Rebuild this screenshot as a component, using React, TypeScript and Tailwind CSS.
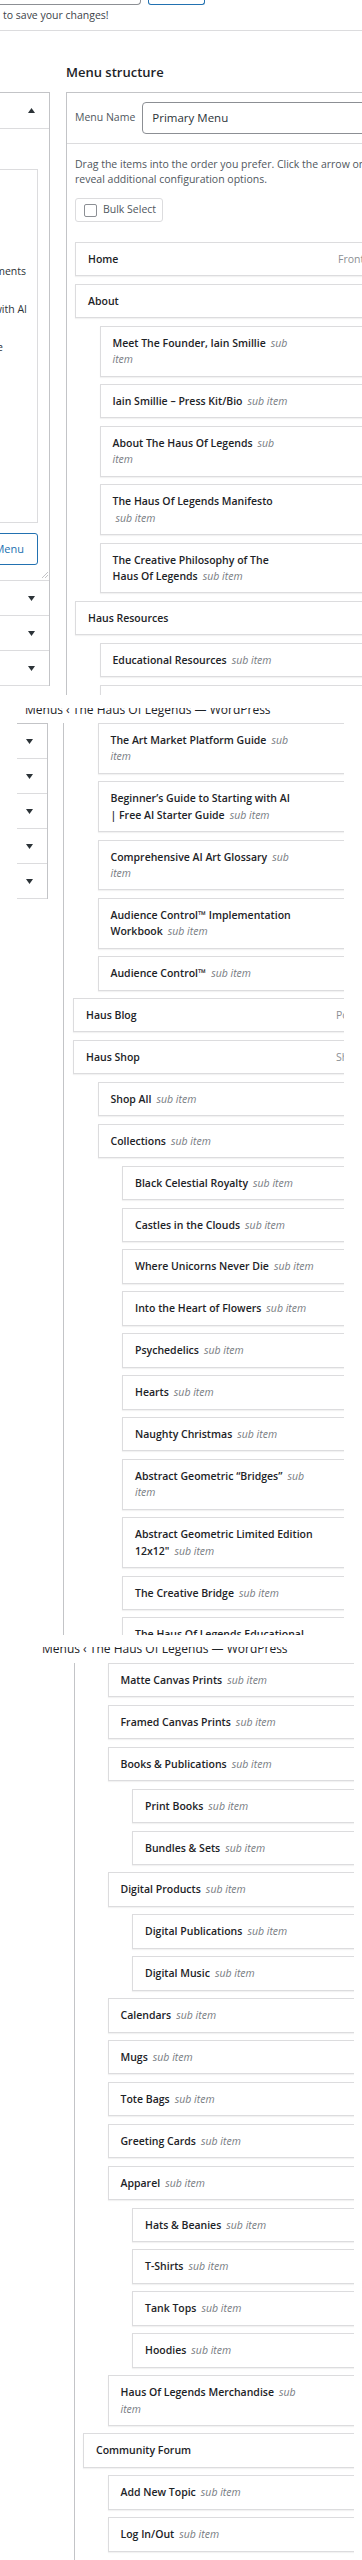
import React from "react";

type Item = {
  lv: 0 | 1 | 2;
  a?: string; // first line, bold title
  s?: string; // italic on first line
  b?: string; // second line, bold title
  s2?: string; // italic on second line
  ind?: boolean; // second line italic is indented
  type?: string;
};

const SEG1: Item[] = [
  { lv: 0, a: "Home", type: "Front" },
  { lv: 0, a: "About" },
  { lv: 1, a: "Meet The Founder, Iain Smillie", s: "sub", s2: "item" },
  { lv: 1, a: "Iain Smillie – Press Kit/Bio", s: "sub item" },
  { lv: 1, a: "About The Haus Of Legends", s: "sub", s2: "item" },
  { lv: 1, a: "The Haus Of Legends Manifesto", s2: "sub item", ind: true },
  { lv: 1, a: "The Creative Philosophy of The", b: "Haus Of Legends", s2: "sub item" },
  { lv: 0, a: "Haus Resources" },
  { lv: 1, a: "Educational Resources", s: "sub item" },
  { lv: 1 },
];

const SEG2: Item[] = [
  { lv: 1, a: "The Art Market Platform Guide", s: "sub", s2: "item" },
  { lv: 1, a: "Beginner’s Guide to Starting with AI", b: "| Free AI Starter Guide", s2: "sub item" },
  { lv: 1, a: "Comprehensive AI Art Glossary", s: "sub", s2: "item" },
  { lv: 1, a: "Audience Control™ Implementation", b: "Workbook", s2: "sub item" },
  { lv: 1, a: "Audience Control™", s: "sub item" },
  { lv: 0, a: "Haus Blog", type: "Po" },
  { lv: 0, a: "Haus Shop", type: "Sh" },
  { lv: 1, a: "Shop All", s: "sub item" },
  { lv: 1, a: "Collections", s: "sub item" },
  { lv: 2, a: "Black Celestial Royalty", s: "sub item" },
  { lv: 2, a: "Castles in the Clouds", s: "sub item" },
  { lv: 2, a: "Where Unicorns Never Die", s: "sub item" },
  { lv: 2, a: "Into the Heart of Flowers", s: "sub item" },
  { lv: 2, a: "Psychedelics", s: "sub item" },
  { lv: 2, a: "Hearts", s: "sub item" },
  { lv: 2, a: "Naughty Christmas", s: "sub item" },
  { lv: 2, a: "Abstract Geometric “Bridges”", s: "sub", s2: "item" },
  { lv: 2, a: "Abstract Geometric Limited Edition", b: "12x12\"", s2: "sub item" },
  { lv: 2, a: "The Creative Bridge", s: "sub item" },
  { lv: 2, a: "The Haus Of Legends Educational" },
];

const SEG3: Item[] = [
  { lv: 1, a: "Matte Canvas Prints", s: "sub item" },
  { lv: 1, a: "Framed Canvas Prints", s: "sub item" },
  { lv: 1, a: "Books & Publications", s: "sub item" },
  { lv: 2, a: "Print Books", s: "sub item" },
  { lv: 2, a: "Bundles & Sets", s: "sub item" },
  { lv: 1, a: "Digital Products", s: "sub item" },
  { lv: 2, a: "Digital Publications", s: "sub item" },
  { lv: 2, a: "Digital Music", s: "sub item" },
  { lv: 1, a: "Calendars", s: "sub item" },
  { lv: 1, a: "Mugs", s: "sub item" },
  { lv: 1, a: "Tote Bags", s: "sub item" },
  { lv: 1, a: "Greeting Cards", s: "sub item" },
  { lv: 1, a: "Apparel", s: "sub item" },
  { lv: 2, a: "Hats & Beanies", s: "sub item" },
  { lv: 2, a: "T-Shirts", s: "sub item" },
  { lv: 2, a: "Tank Tops", s: "sub item" },
  { lv: 2, a: "Hoodies", s: "sub item" },
  { lv: 1, a: "Haus Of Legends Merchandise", s: "sub", s2: "item" },
  { lv: 0, a: "Community Forum" },
  { lv: 1, a: "Add New Topic", s: "sub item" },
  { lv: 1, a: "Log In/Out", s: "sub item" },
];

function Tri({ up }: { up?: boolean }) {
  return (
    <svg width="7" height="5" viewBox="0 0 7 5" className="block">
      <polygon points={up ? "0,5 7,5 3.5,0" : "0,0 7,0 3.5,5"} fill="#2c3338" />
    </svg>
  );
}

function Sub({ children, cls = "" }: { children: React.ReactNode; cls?: string }) {
  return <span className={`font-normal italic text-[#787c82] ${cls}`}>{children}</span>;
}

function Card({ it }: { it: Item }) {
  const indent = it.lv === 1 ? "ml-[24.5px]" : it.lv === 2 ? "ml-[49px]" : "";
  const twoLines = it.b !== undefined || it.s2 !== undefined;
  return (
    <div
      className={`mt-[7.5px] flex w-[317px] border border-[#dcdcde] bg-white py-[8px] pl-[12px] shadow-[0_1px_1px_rgba(0,0,0,0.05)] first:mt-0 ${indent}`}
    >
      <div className="w-[250px] flex-none text-[10.5px] leading-[16.4px] font-semibold text-[#1d2327]">
        <div className="h-[16.4px] whitespace-nowrap">
          {it.a}
          {it.s && <Sub cls="ml-[5px]">{it.s}</Sub>}
        </div>
        {twoLines && (
          <div className="whitespace-nowrap">
            {it.b}
            {it.s2 && <Sub cls={it.b ? "ml-[5px]" : it.ind ? "ml-[3px]" : ""}>{it.s2}</Sub>}
          </div>
        )}
      </div>
      {it.type && (
        <span className="whitespace-nowrap text-[10.5px] leading-[16.4px] text-[#8c8f94]">{it.type}</span>
      )}
    </div>
  );
}

function PrintHeader({ left }: { left: string }) {
  return (
    <div className={`h-[10px] overflow-hidden ${left}`}>
      <p className="mt-[-4.7px] whitespace-nowrap text-[12px] leading-[14px] text-[#1d2327]">
        Menus ‹ The Haus Of Legends — WordPress
      </p>
    </div>
  );
}

function CollapsedRow() {
  return (
    <div className="flex h-[35px] items-center justify-end border-b border-[#dcdcde] pr-[14px]">
      <Tri />
    </div>
  );
}

function LeftPanelTop() {
  return (
    <div className="ml-[-200px] mt-[61px] w-[250px] flex-none border-r border-t border-[#c3c4c7]">
      <div className="flex h-[36px] items-center justify-end border-b border-[#dcdcde] pr-[14px]">
        <Tri up />
      </div>
      <div className="relative h-[452px] border-b border-[#dcdcde] pr-[11px] pt-[40px]">
        <div className="flex h-[354px] flex-col border border-[#dcdcde] pt-[93px] text-[10.5px] leading-[16px] text-[#2c3338]">
          <div className="flex h-[16px] justify-end whitespace-nowrap pr-[11px]">ments</div>
          <div className="mt-[22px] flex h-[16px] justify-end whitespace-nowrap pr-[10px]">with AI</div>
          <div className="mt-[22px] flex h-[16px] justify-end whitespace-nowrap pr-[34px]">e</div>
        </div>
        <div className="ml-auto mt-[10px] flex h-[32px] w-[100px] items-center justify-end rounded-[3px] border border-[#2271b1] pr-[13px] text-[11px] text-[#2271b1]">
          Menu
        </div>
        <svg width="7" height="7" viewBox="0 0 7 7" className="absolute bottom-[2px] right-[1px]">
          <line x1="1" y1="7" x2="7" y2="1" stroke="#c3c4c7" strokeWidth="1" />
          <line x1="4" y1="7" x2="7" y2="4" stroke="#c3c4c7" strokeWidth="1" />
        </svg>
      </div>
      <CollapsedRow />
      <CollapsedRow />
      <CollapsedRow />
    </div>
  );
}

function SegmentOne() {
  return (
    <div className="h-[695px] w-[362px] overflow-hidden">
      <div className="flex h-[5px] items-end">
        <div className="h-[5px] w-[141px] flex-none rounded-br-[4px] border-b border-r border-[#8c8f94]" />
        <div className="ml-[7px] h-[5px] w-[57px] flex-none rounded-b-[3px] border-x border-b border-[#2271b1]" />
      </div>
      <p className="mt-[2px] pl-[3px] text-[10.5px] leading-[16px] text-[#3c434a]">to save your changes!</p>
      <div className="mt-[7px] border-t border-[#dcdcde]" />
      <div className="flex items-start">
        <LeftPanelTop />
        <div className="ml-[16px] w-[420px] flex-none">
          <h2 className="mt-[32px] text-[13px] font-semibold leading-[18px] text-[#1d2327]">Menu structure</h2>
          <div className="mt-[11px] h-[700px] border-l border-t border-[#c3c4c7]">
            <div className="flex items-center border-b border-[#dcdcde] py-[9px] pl-[8px]">
              <span className="text-[10.5px] text-[#50575e]">Menu Name</span>
              <div className="ml-[7px] flex h-[32px] w-[300px] items-center rounded-[4px] border border-[#8c8f94] pl-[9px] text-[11.5px] text-[#2c3338]">
                Primary Menu
              </div>
            </div>
            <div className="pl-[8px]">
              <p className="whitespace-nowrap pt-[12.5px] text-[10.5px] leading-[15px] text-[#50575e]">
                Drag the items into the order you prefer. Click the arrow on t
                <br />
                reveal additional configuration options.
              </p>
              <div className="mt-[11.5px] flex h-[24px] w-[88px] items-center rounded-[3px] border border-[#dcdcde] pl-[8px]">
                <span className="h-[13px] w-[13px] flex-none rounded-[2px] border border-[#8c8f94]" />
                <span className="ml-[6px] whitespace-nowrap text-[10.5px] text-[#50575e]">Bulk Select</span>
              </div>
              <div className="mt-[20px]">
                {SEG1.map((it, i) => (
                  <Card key={i} it={it} />
                ))}
              </div>
            </div>
          </div>
        </div>
      </div>
    </div>
  );
}

function SegmentTwo() {
  return (
    <div className="h-[940px] w-[344px] overflow-hidden">
      <div className="h-[13px]" />
      <PrintHeader left="pl-[25px]" />
      <div className="mt-[5px] flex items-start">
        <div className="ml-[17px] w-[31px] flex-none border-r border-t border-[#c3c4c7]">
          <CollapsedRow />
          <CollapsedRow />
          <CollapsedRow />
          <CollapsedRow />
          <CollapsedRow />
        </div>
        <div className="ml-[15px] h-[912px] w-[400px] flex-none border-l border-[#c3c4c7] pl-[9px]">
          {SEG2.map((it, i) => (
            <Card key={i} it={it} />
          ))}
        </div>
      </div>
    </div>
  );
}

function SegmentThree() {
  return (
    <div className="h-[925px] w-[354px] overflow-hidden">
      <div className="h-[12px]" />
      <PrintHeader left="pl-[42px]" />
      <div className="ml-[74px] mt-[6px] h-[900px] w-[400px] border-l border-[#c3c4c7] pl-[8px]">
        {SEG3.map((it, i) => (
          <Card key={i} it={it} />
        ))}
      </div>
    </div>
  );
}

export default function App() {
  return (
    <div className="w-[362px] overflow-hidden bg-white font-['Open_Sans','Noto_Sans',sans-serif] text-[#1d2327]">
      <SegmentOne />
      <SegmentTwo />
      <SegmentThree />
    </div>
  );
}
